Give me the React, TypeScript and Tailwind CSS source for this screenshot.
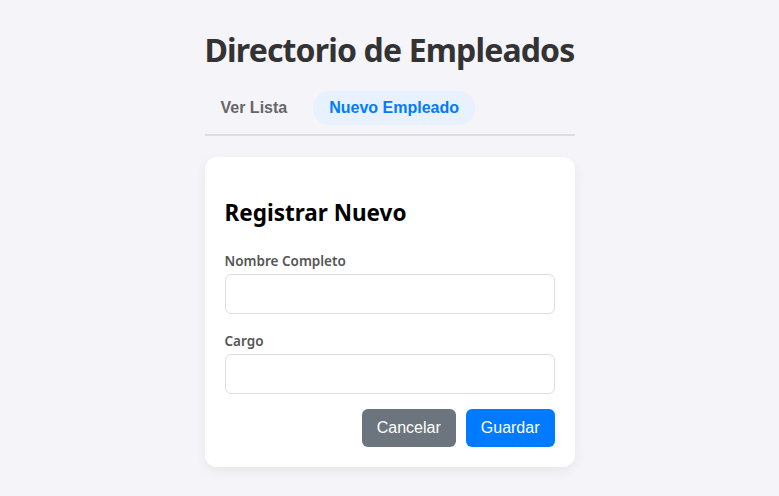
import React from "react";

export default function App() {
  return (
    <div className="min-h-[496px] w-full bg-[#f4f4f9] font-['Noto_Sans',sans-serif] text-[#333]">
      <div className="mx-auto w-[370px] pt-[26px]">
        <h1 className="whitespace-nowrap text-center text-[32px] font-bold leading-[48px] tracking-[-0.85px] text-[#333]">
          Directorio de Empleados
        </h1>
        <div className="mt-[17px] flex gap-[10px] border-b-2 border-[#dddddd] pb-[9px] font-['Liberation_Sans',sans-serif]">
          <button className="rounded-full px-4 py-2 text-base font-bold leading-[18px] text-[#666]">
            Ver Lista
          </button>
          <button className="rounded-full bg-[#e7f1ff] px-4 py-2 text-base font-bold leading-[18px] text-[#007bff]">
            Nuevo Empleado
          </button>
        </div>
        <div className="mt-[21px] rounded-xl bg-white p-5 shadow-[0_4px_12px_rgba(0,0,0,0.06)]">
          <h2 className="mt-[21px] text-[22.5px] font-bold leading-[30px] text-black">Registrar Nuevo</h2>
          <div className="mt-[23px]">
            <label className="block text-[13.5px] font-semibold leading-5 text-[#555]">Nombre Completo</label>
            <input className="mt-[3px] block h-10 w-full rounded-md border border-[#dddddd] bg-white px-2" />
          </div>
          <div className="mt-[17px]">
            <label className="block text-[13.5px] font-semibold leading-5 text-[#555]">Cargo</label>
            <input className="mt-[3px] block h-10 w-full rounded-md border border-[#dddddd] bg-white px-2" />
          </div>
          <div className="mt-[15px] flex justify-end gap-[10px] font-['Liberation_Sans',sans-serif]">
            <button className="h-[38px] rounded-md bg-[#6c757d] px-[15px] text-base text-white">Cancelar</button>
            <button className="h-[38px] rounded-md bg-[#007bff] px-[15px] text-base text-white">Guardar</button>
          </div>
        </div>
      </div>
    </div>
  );
}
